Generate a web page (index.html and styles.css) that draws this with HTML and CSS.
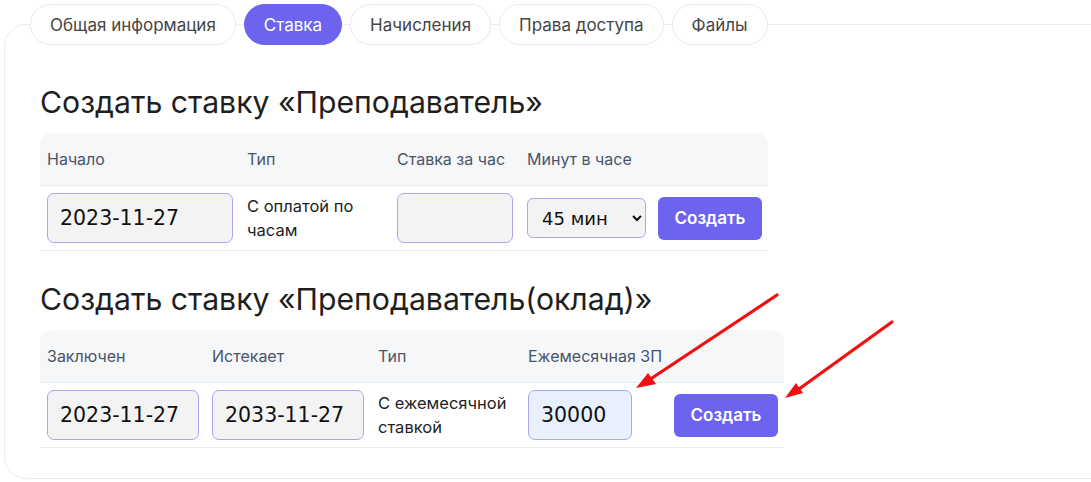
FILE: index.html
```html
<!DOCTYPE html>
<html lang="ru">
<head>
<meta charset="utf-8">
<title>Ставка</title>
<link rel="stylesheet" href="styles.css">
</head>
<body>
<div class="page">
  <nav class="tabs">
    <a class="tab">Общая информация</a>
    <a class="tab active">Ставка</a>
    <a class="tab">Начисления</a>
    <a class="tab">Права доступа</a>
    <a class="tab">Файлы</a>
  </nav>
  <section class="card">
    <h2 class="title">Создать ставку «Преподаватель»</h2>
    <table class="rate t1">
      <thead>
        <tr><th class="c1">Начало</th><th class="c2">Тип</th><th class="c3">Ставка за час</th><th class="c4">Минут в часе</th><th class="c5"></th></tr>
      </thead>
      <tbody>
        <tr>
          <td><input class="field date" value="2023-11-27"></td>
          <td class="type">С оплатой по часам</td>
          <td><input class="field small" value=""></td>
          <td><select class="select"><option>45 мин</option><option>60 мин</option></select></td>
          <td><button class="btn">Создать</button></td>
        </tr>
      </tbody>
    </table>

    <h2 class="title second">Создать ставку «Преподаватель(оклад)»</h2>
    <table class="rate t2">
      <thead>
        <tr><th class="d1">Заключен</th><th class="d2">Истекает</th><th class="d3">Тип</th><th class="d4">Ежемесячная ЗП</th><th class="d5"></th></tr>
      </thead>
      <tbody>
        <tr>
          <td><input class="field date2" value="2023-11-27"></td>
          <td><input class="field date2" value="2033-11-27"></td>
          <td class="type">С ежемесячной ставкой</td>
          <td><input class="field salary" value="30000"></td>
          <td class="btncell"><button class="btn">Создать</button></td>
        </tr>
      </tbody>
    </table>
  </section>
  <svg class="arrows" width="1091" height="482" viewBox="0 0 1091 482">
    <g stroke="#f01010" stroke-width="3.2" stroke-linecap="round" fill="none">
      <line x1="777" y1="295" x2="652" y2="378"/>
      <line x1="892" y1="322" x2="799" y2="389"/>
    </g>
    <g fill="#f01010">
      <polygon points="636,388 648,373 656,384"/>
      <polygon points="785,398 796,383 803,393"/>
    </g>
  </svg>
</div>
</body>
</html>
```
FILE: styles.css
```css
* { box-sizing: border-box; }
html, body { margin: 0; padding: 0; background: #fff; }
body { font-family: Inter, "Noto Sans", sans-serif; color: #222; }
.page { position: relative; width: 1091px; height: 482px; overflow: hidden; }

.tabs {
  position: relative;
  z-index: 1;
  display: flex;
  gap: 8px;
  padding: 4px 0 0 30px;
}
.tab {
  display: flex;
  align-items: center;
  height: 41px;
  padding: 0 19px;
  border: 1px solid #e6ebf3;
  border-radius: 21px;
  background: #fff;
  font-size: 17px;
  color: #454545;
  white-space: nowrap;
}
.tab.active {
  background: #6c64ef;
  border-color: #6c64ef;
  color: #fff;
}

.card {
  margin: -21px 0 0 4px;
  width: 1120px;
  height: 455px;
  border: 1px solid #e8edf4;
  border-radius: 22px;
  padding: 59px 0 0 35px;
}
.title {
  margin: 0 0 13px;
  font-size: 30.2px;
  line-height: 36px;
  font-weight: 400;
  color: #1f1f1f;
}
.title.second { margin-top: 30px; }

.rate {
  border-collapse: separate;
  border-spacing: 0;
  table-layout: fixed;
}
.t1 { width: 728px; }
.t2 { width: 744px; }
.c1 { width: 200px; } .c2 { width: 150px; } .c3 { width: 130px; } .c4 { width: 130px; } .c5 { width: 118px; }
.d1 { width: 165px; } .d2 { width: 166px; } .d3 { width: 150px; } .d4 { width: 144px; } .d5 { width: 119px; }

.rate th {
  height: 53px;
  background: #f6f7f9;
  text-align: left;
  font-weight: 400;
  font-size: 16px;
  color: #4a5468;
  padding: 0 0 0 7px;
  border-bottom: 1px solid #e6ebf2;
}
.rate th:first-child { border-top-left-radius: 12px; }
.rate th:last-child { border-top-right-radius: 12px; }
.rate td {
  height: 65px;
  padding: 0 0 0 7px;
  border-bottom: 1px solid #e6ebf2;
  vertical-align: middle;
}
.type {
  font-size: 16.5px;
  line-height: 24px;
  color: #222;
  padding-right: 8px !important;
}

.field {
  display: block;
  height: 50px;
  border: 1px solid #aaa5f0;
  border-radius: 7px;
  background: #f3f3f4;
  font-family: "DejaVu Sans", sans-serif;
  font-size: 20.5px;
  color: #111;
  padding: 0 12px;
  outline: none;
}
.date { width: 186px; }
.small { width: 116px; }
.date2 { width: 152px; }
.salary { width: 104px; background: #e8f0fe; }

.select {
  display: block;
  width: 119px;
  height: 40px;
  border: 1px solid #aaa5f0;
  border-radius: 6px;
  background: #f3f3f4;
  font-family: "DejaVu Sans", sans-serif;
  font-size: 18px;
  color: #111;
  padding: 0 6px 0 10px;
}

.btn {
  display: block;
  width: 104px;
  height: 43px;
  border: none;
  border-radius: 6px;
  background: #6c64ef;
  color: #fff;
  font-family: Inter, sans-serif;
  font-weight: 600;
  font-size: 17px;
}
.t1 td:last-child { padding-left: 8px; }
.btncell { padding-left: 9px !important; }

.arrows { position: absolute; left: 0; top: 0; pointer-events: none; }
```
